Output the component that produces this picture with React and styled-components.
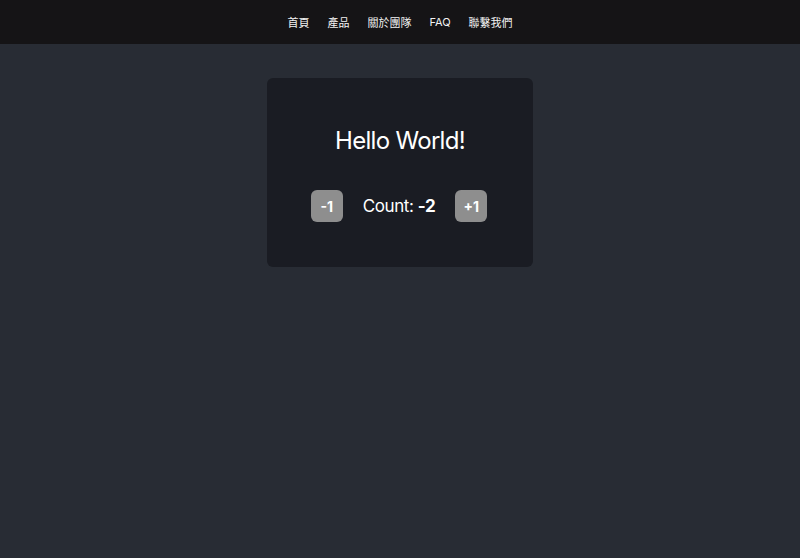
import { useState } from 'react';
import styled, { createGlobalStyle } from 'styled-components';

const GlobalStyle = createGlobalStyle`
  html, body {
    margin: 0;
    padding: 0;
    background-color: #282c34;
    font-family: Inter, "Noto Sans CJK TC", sans-serif;
    color: #fff;
  }
`;

const App = () => {
  const [count, setCount] = useState(-2);
  const links = ['首頁', '產品', '關於團隊', 'FAQ', '聯繫我們'];

  return (
    <Page>
      <GlobalStyle />
      <NavBar>
        {links.map((label) => (
          <NavLink key={label} href="#">
            {label}
          </NavLink>
        ))}
      </NavBar>

      <Main>
        <Card>
          <Title>Hello World!</Title>
          <Counter>
            <CountBtn type="button" onClick={() => setCount(count - 1)}>
              -1
            </CountBtn>
            <CountText>
              Count: <b>{count}</b>
            </CountText>
            <CountBtn type="button" onClick={() => setCount(count + 1)}>
              +1
            </CountBtn>
          </Counter>
        </Card>
      </Main>
    </Page>
  );
};

const Page = styled.div`
  min-height: 100vh;
  background-color: #282c34;
`;

const NavBar = styled.nav`
  height: 44px;
  background-color: #151416;
  display: flex;
  justify-content: center;
  align-items: center;
  gap: 18px;
`;

const NavLink = styled.a`
  color: #f2f2f2;
  text-decoration: none;
  font-size: 11px;
  font-family: Inter, "Noto Sans CJK TC", sans-serif;
`;

const Main = styled.main`
  display: flex;
  justify-content: center;
  padding-top: 34px;
`;

const Card = styled.section`
  width: 266px;
  box-sizing: border-box;
  background-color: #1a1c23;
  border-radius: 6px;
  padding: 48px 0 45px;
  display: flex;
  flex-direction: column;
  align-items: center;
  gap: 35px;
`;

const Title = styled.h1`
  margin: 0;
  font-size: 24px;
  font-weight: 400;
  line-height: 29px;
  letter-spacing: -0.7px;
  color: #fff;
`;

const Counter = styled.div`
  display: flex;
  align-items: center;
  gap: 20px;
  margin-left: -2px;
`;

const CountBtn = styled.button`
  width: 32px;
  height: 32px;
  border: none;
  outline: none;
  border-radius: 6px;
  background-color: #8e8e8e;
  color: #fff;
  font-family: Inter, sans-serif;
  font-size: 14px;
  font-weight: 700;
  padding: 0;
  cursor: pointer;
`;

const CountText = styled.span`
  font-size: 17px;
  letter-spacing: -0.4px;
  color: #fff;
  & b {
    font-weight: 700;
  }
`;

export default App;
